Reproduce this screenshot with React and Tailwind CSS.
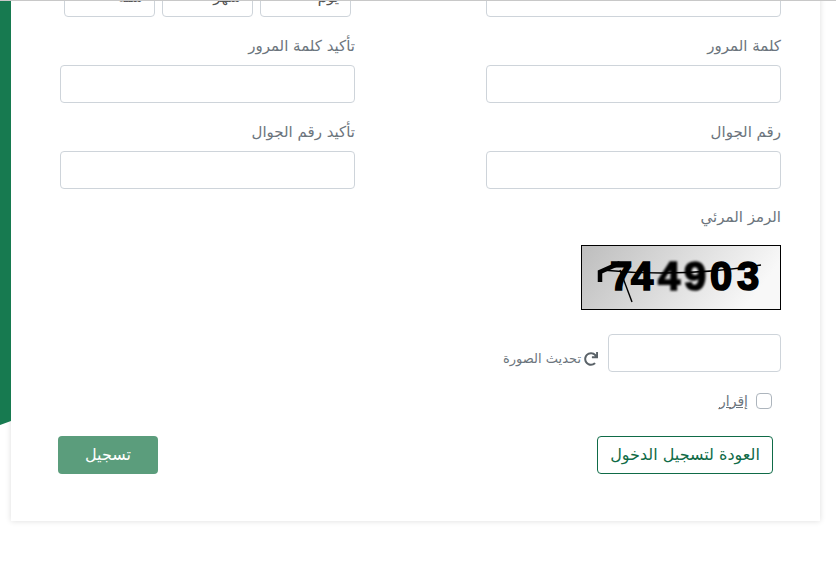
import React from 'react';
import { FaRedo } from 'react-icons/fa';

const inputClass = 'block w-full h-[38px] rounded-[4px] border border-[#ced4da] bg-white';
const labelClass = 'block h-[22px] mb-[8px] text-[15px] leading-[22px] text-[#6c757d]';

const Field = ({ label }) => (
    <div>
        <label className={labelClass}>{label}</label>
        <input type="text" className={inputClass} />
    </div>
);

const DateSelect = ({ text }) => (
    <div className="w-[91px] h-[38px] rounded-[4px] border border-[#ced4da] bg-white pr-[11px] text-[15px] leading-[34px] text-[#555]">
        {text}
    </div>
);

const Captcha = () => (
    <svg width="198" height="63" viewBox="1 1 198 63" className="block box-content border border-black" aria-label="captcha">
        <defs>
            <linearGradient id="captchaBg" x1="0" y1="0" x2="1" y2="0.25">
                <stop offset="0" stopColor="#bdbdbd" />
                <stop offset="1" stopColor="#f8f8f8" />
            </linearGradient>
            <filter id="captchaBlur" x="-10%" y="-10%" width="120%" height="120%">
                <feGaussianBlur stdDeviation="0.8" />
            </filter>
        </defs>
        <rect width="200" height="65" fill="url(#captchaBg)" />
        <g fontFamily="'Liberation Sans', sans-serif" fontWeight="700" fontSize="40" fill="#000" stroke="#000" strokeWidth="1.6" direction="ltr">
            <text x="29" y="45">7</text>
            <text x="50" y="45">4</text>
            <text x="77" y="45" filter="url(#captchaBlur)">4</text>
            <text x="103" y="45" filter="url(#captchaBlur)">9</text>
            <text x="129" y="45">0</text>
            <text x="156" y="45">3</text>
        </g>
        <path d="M21 25 Q99 33 180 20" fill="none" stroke="#000" strokeWidth="1.4" />
        <path d="M19 37 L19 27 L39 18" fill="none" stroke="#000" strokeWidth="4.5" />
        <path d="M39 25 L51 57" fill="none" stroke="#000" strokeWidth="1.4" />
    </svg>
);

const App = () => {
    return (
        <div className="relative w-[836px] h-[574px] overflow-hidden bg-white font-['DejaVu_Sans',sans-serif]" dir="rtl">
            {/* Green strip behind the card */}
            <div className="absolute left-0 top-0 w-[11px] h-[425px] bg-[#177a50] [clip-path:polygon(0_0,100%_0,100%_421px,0_425px)]" />
            <div className="absolute inset-x-0 top-0 h-px bg-[#c8c8c8] z-10" />

            <div className="w-[809px] h-[542px] mr-[16px] mt-[-21px] bg-white shadow-[0_0_6px_rgba(0,0,0,0.14)] pr-[39px] pl-[49px]">
                <div className="grid grid-cols-[295px_295px] justify-between gap-y-[18px]">
                    {/* Cropped first row */}
                    <div>
                        <input type="text" className={inputClass} />
                    </div>
                    <div className="flex justify-between pr-[4px] pl-[4px] gap-[7px]">
                        <DateSelect text="يوم" />
                        <DateSelect text="شهر" />
                        <DateSelect text="سنة" />
                    </div>

                    <Field label="كلمة المرور" />
                    <Field label="تأكيد كلمة المرور" />
                    <Field label="رقم الجوال" />
                    <Field label="تأكيد رقم الجوال" />
                </div>

                {/* Captcha */}
                <div className="mt-[17px] w-[295px]">
                    <label className={labelClass}>الرمز المرئي</label>
                    <div className="mt-[17px] w-[200px] h-[65px]">
                        <Captcha />
                    </div>
                    <div className="mt-[24px] flex items-center gap-[10px] w-[330px]">
                        <input type="text" className="block w-[173px] h-[38px] rounded-[4px] border border-[#ced4da] bg-white" />
                        <span className="flex items-center gap-[3px] mt-[12px] text-[13px] text-[#6c757d] whitespace-nowrap">
                            <FaRedo className="text-[14px] text-[#5a6268]" />
                            تحديث الصورة
                        </span>
                    </div>
                    <label className="mt-[21px] mr-[9px] flex items-center gap-[8px] h-[16px] text-[14px] text-[#6c757d]">
                        <input type="checkbox" className="appearance-none w-[16px] h-[16px] rounded-[4px] border border-[#adb5bd] bg-white" />
                        <span className="underline">إقرار</span>
                    </label>
                </div>

                {/* Actions */}
                <div className="mt-[27px] flex justify-between pr-[8px]">
                    <button className="w-[176px] h-[38px] rounded-[4px] border border-[#0f6b47] bg-white text-[16px] text-[#0f6b47]">
                        العودة لتسجيل الدخول
                    </button>
                    <button className="w-[100px] h-[38px] -ml-[2px] rounded-[4px] bg-[#5b9d7c] text-[16px] text-white">
                        تسجيل
                    </button>
                </div>
            </div>
        </div>
    );
};

export default App;
